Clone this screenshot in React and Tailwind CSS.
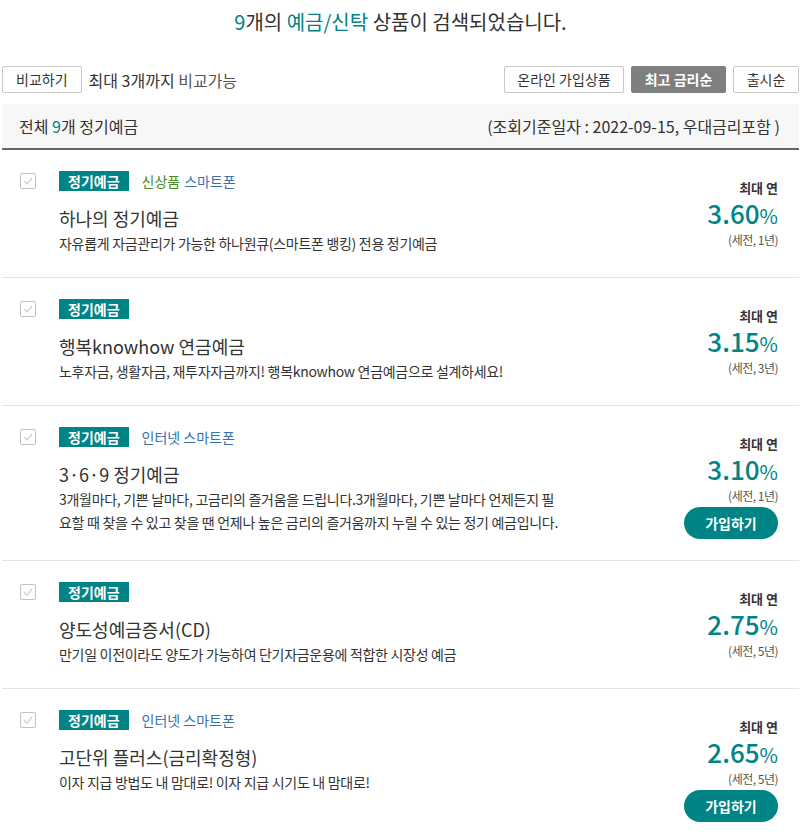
const products = [
  {
    tags: [
      { text: '신상품', color: 'text-[#4a8a24]' },
      { text: '스마트폰', color: 'text-[#3572ad]' },
    ],
    title: '하나의 정기예금',
    desc: ['자유롭게 자금관리가 가능한 하나원큐(스마트폰 뱅킹) 전용 정기예금'],
    rate: '3.60',
    term: '(세전, 1년)',
    join: false,
  },
  {
    tags: [],
    title: '행복knowhow 연금예금',
    desc: ['노후자금, 생활자금, 재투자자금까지! 행복knowhow 연금예금으로 설계하세요!'],
    rate: '3.15',
    term: '(세전, 3년)',
    join: false,
  },
  {
    tags: [{ text: '인터넷 스마트폰', color: 'text-[#3572ad]' }],
    title: '3·6·9 정기예금',
    desc: [
      '3개월마다, 기쁜 날마다, 고금리의 즐거움을 드립니다.3개월마다, 기쁜 날마다 언제든지 필',
      '요할 때 찾을 수 있고 찾을 땐 언제나 높은 금리의 즐거움까지 누릴 수 있는 정기 예금입니다.',
    ],
    rate: '3.10',
    term: '(세전, 1년)',
    join: true,
  },
  {
    tags: [],
    title: '양도성예금증서(CD)',
    desc: ['만기일 이전이라도 양도가 가능하여 단기자금운용에 적합한 시장성 예금'],
    rate: '2.75',
    term: '(세전, 5년)',
    join: false,
  },
  {
    tags: [{ text: '인터넷 스마트폰', color: 'text-[#3572ad]' }],
    title: '고단위 플러스(금리확정형)',
    desc: ['이자 지급 방법도 내 맘대로! 이자 지급 시기도 내 맘대로!'],
    rate: '2.65',
    term: '(세전, 5년)',
    join: true,
  },
];

function CheckBox() {
  return (
    <div className="w-[16px] h-[16px] border border-[#c4c4c4] rounded-[2px] bg-white flex items-center justify-center">
      <svg width="10" height="8" viewBox="0 0 10 8" fill="none">
        <path d="M1 4l3 3 5-6" stroke="#d0d0d0" strokeWidth="1.2" />
      </svg>
    </div>
  );
}

function ProductRow({ p, last }) {
  return (
    <div className={`flex pt-[21px] ${p.join ? 'pb-[21px]' : 'pb-[22px]'} ${last ? '' : 'border-b border-[#e3e3e3]'}`}>
      <div className="w-[57px] pl-[18px] pt-[2px] shrink-0">
        <CheckBox />
      </div>
      <div className="flex-1">
        <div className="flex items-center h-[20px]">
          <span className="bg-[#008485] text-white text-[14px] font-bold px-[9px] h-[20px] leading-[20px] mr-[13px]">정기예금</span>
          {p.tags.map((t, i) => (
            <span key={t.text} className={`text-[14px] ${t.color} ${i > 0 ? 'ml-[4px]' : ''}`}>{t.text}</span>
          ))}
        </div>
        <div className="mt-[14px] text-[18px] text-[#333] leading-[26px]">{p.title}</div>
        <div className="mt-[1px] text-[14px] text-[#333] leading-[23px] tracking-[-0.3px]">
          {p.desc.map((d) => (
            <div key={d}>{d}</div>
          ))}
        </div>
      </div>
      <div className="w-[150px] pr-[21px] pt-[8px] flex flex-col items-end shrink-0">
        <div className="text-[13px] font-bold text-[#333] leading-[18px]">최대 연</div>
        <div className="text-[#008485] leading-[30px] mt-[1px]">
          <span className="text-[26px] font-medium">{p.rate}</span>
          <span className="text-[20px]">%</span>
        </div>
        <div className="text-[12px] text-[#555] leading-[16px] tracking-[-0.5px]">{p.term}</div>
        {p.join && (
          <button className="mt-[3px] w-[94px] h-[32px] rounded-full bg-[#008485] text-white text-[14px] font-bold">
            가입하기
          </button>
        )}
      </div>
    </div>
  );
}

export default function App() {
  return (
    <div
      className="w-[809px] bg-white text-[#333]"
      style={{ fontFamily: '"Noto Sans CJK KR", "Noto Sans", sans-serif' }}
    >
      <div className="ml-[2px] w-[797px]">
        <div className="pt-[8px] text-center text-[20px] leading-[28px] text-[#333]">
          <span className="text-[#008485]">9</span>개의 <span className="text-[#008485]">예금/신탁</span> 상품이 검색되었습니다.
        </div>
        <div className="mt-[30px] flex items-center justify-between">
          <div className="flex items-center gap-[7px]">
            <button className="h-[27px] px-[13px] border border-[#c9c9c9] rounded-[2px] text-[14px] text-[#333] bg-white">비교하기</button>
            <span className="text-[16px] text-[#333]">
              최대 3개까지 <span className="text-[#555]">비교가능</span>
            </span>
          </div>
          <div className="flex items-center gap-[7px]">
            <button className="h-[27px] w-[120px] border border-[#c9c9c9] rounded-[2px] text-[14px] text-[#333] bg-white">온라인 가입상품</button>
            <button className="h-[27px] w-[95px] rounded-[2px] text-[14px] font-bold text-white bg-[#7f7f7f]">최고 금리순</button>
            <button className="h-[27px] w-[66px] border border-[#c9c9c9] rounded-[2px] text-[14px] text-[#333] bg-white">출시순</button>
          </div>
        </div>
        <div className="mt-[11px] h-[46px] bg-[#f7f7f7] border-b-2 border-[#666] flex items-center justify-between px-[17px] text-[16px] text-[#333]">
          <span>
            전체 <span className="text-[#008485]">9</span>개 정기예금
          </span>
          <span className="pr-[2px]">(조회기준일자 : 2022-09-15, 우대금리포함 )</span>
        </div>
        {products.map((p, i) => (
          <ProductRow key={p.title} p={p} last={i === products.length - 1} />
        ))}
      </div>
    </div>
  );
}
